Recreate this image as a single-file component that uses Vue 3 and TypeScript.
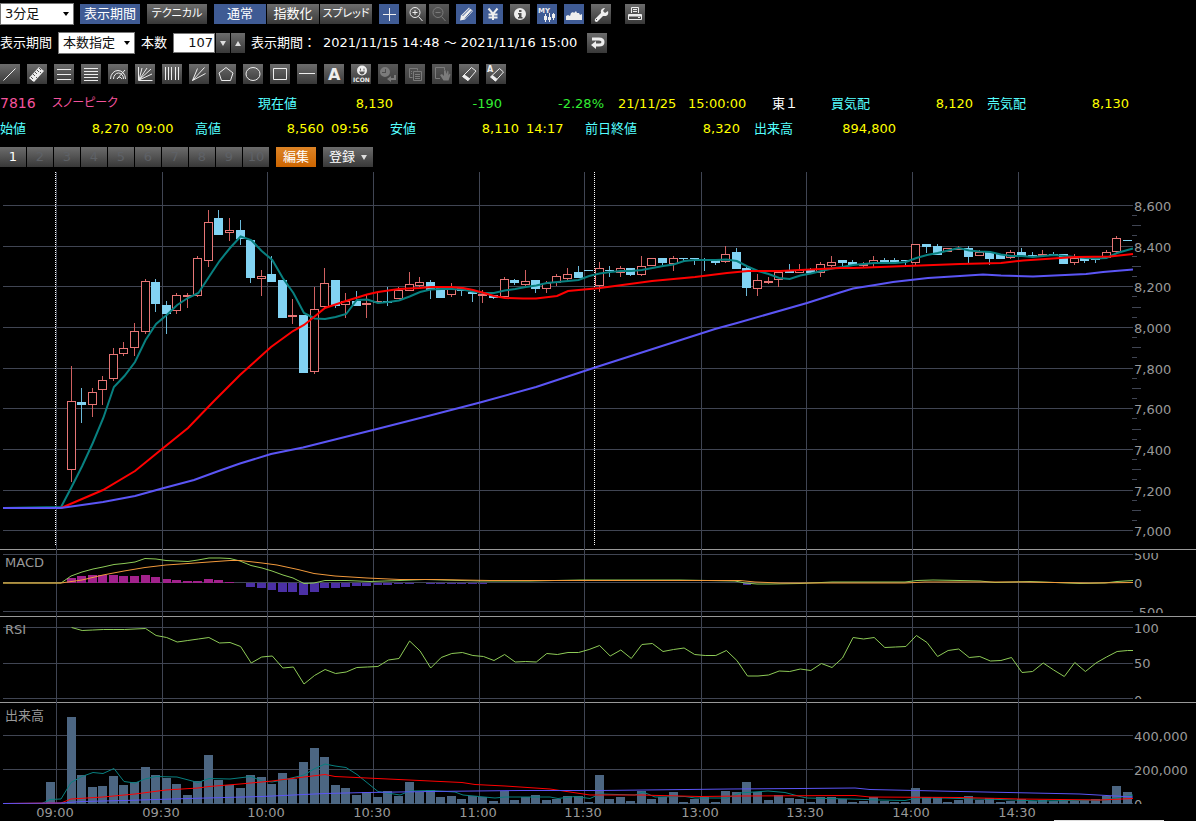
<script setup lang="ts">
import { ref } from 'vue'

interface Icon {
  label: string
  stroke?: string
  fill?: string
  glyph?: { text: string; x: number; y: number; size: number }[]
  active?: boolean
  disabled?: boolean
}

const viewIcons: Icon[] = [
  { label: '十字線', stroke: 'M10.5 4v13M4 10.5h13', active: true },
  { label: '拡大', stroke: 'M14 8.5a5 5 0 1 1-10 0a5 5 0 0 1 10 0M9 6v5M6.500 8.500h5M12.500 12.500l4 4.500' },
  { label: '縮小', stroke: 'M14 8.500a5 5 0 1 1-10 0a5 5 0 0 1 10 0M6.500 8.500h5M12.500 12.500l4 4.500', disabled: true },
  { label: '描画', fill: 'M4 16.500l1-5l8-8l4 3.500l-8 8.500z', stroke: 'M6.500 12l8-8M9 14.500l7-8', active: true },
  { label: '円', stroke: 'M5.500 4.500l4.500 5.500l4.500-5.500M10 10v6M5.500 10.500h9M5.500 13.500h9', active: true },
  { label: '情報', fill: 'M10 4a6 6 0 1 0 0 12a6 6 0 0 0 0-12zM9 6h2.500v2h-2.500zM8 9h3.500v4h1v1.500h-4.500v-1.500h1v-2.500h-1z' },
  { label: 'MYチャート', glyph: [{ text: 'MY', x: 1, y: 9, size: 7 }], stroke: 'M8.500 10v8M12.500 9v9M16.500 9v7', fill: 'M7 12h3v4h-3zM11 13h3v3h-3zM15 10h3v4h-3z', active: true },
  { label: 'エリア', fill: 'M2 16v-4l2-1l2 1l1-3l2-1l1 1l2-2l1 2h2l1 2l2-1v6z', active: true },
  { label: '設定', fill: 'M4 15l6-6q-1-4 3-5l1 0l-2 3l2 2l3-2q1 4-2 5l-3 0l-6 6q-3 0-2-3zM5 15v1h1v-1z' },
]

const drawIcons: Icon[] = [
  { label: 'トレンドライン', stroke: 'M3.500 16.500l12-12' },
  { label: '定規', fill: 'M2 14l10-11l5 4l-10 11z', stroke: 'M3 14l3 3' },
  { label: '三本線', stroke: 'M3 5.500h14M3 10.500h14M3 15.500h14' },
  { label: '五本線', stroke: 'M3 4.500h14M3 7.500h14M3 10.500h14M3 13.500h14M3 16.500h14' },
  { label: 'アーク', stroke: 'M2.500 15a7.500 8.500 0 0 1 15 0M5.500 15a5 6 0 0 1 10 0M9 15a3 4 0 0 1 5 0M9 15l8-9' },
  { label: 'ファン', stroke: 'M3.500 3v13.500h14M4 16l3-12M4 16l8-12M4 16l12-11M4 16l13-6' },
  { label: '縦線群', stroke: 'M3.500 3v13M6.500 3v13M9.500 3v13M13.500 3v13M16.500 3v13' },
  { label: 'スピードライン', stroke: 'M3.500 16.500l5-12M3.500 16.500l12-13M3.500 16.500l13-7' },
  { label: '五角形', stroke: 'M10 3.500l7 5.500l-2.500 7.500h-9l-2.500-7.500z' },
  { label: '円形', stroke: 'M17 10a7 6.500 0 1 1-14 0a7 6.500 0 0 1 14 0z' },
  { label: '四角形', stroke: 'M3.500 4.500h13v11h-13z' },
  { label: '水平線', stroke: 'M2 9.500h16' },
  { label: '文字', glyph: [{ text: 'A', x: 4, y: 16, size: 16 }] },
  { label: 'アイコン', fill: 'M11 1.500a5 5 0 1 0 0 10a5 5 0 0 0 0-10zM9 4.500h1v2h-1zM12.500 4.500h1v2h-1zM8 7.500h6q-1 3-3 3t-3-3z', glyph: [{ text: 'ICON', x: 2, y: 18, size: 6 }] },
  { label: '履歴', fill: 'M7 3a5 5 0 1 0 0 10a5 5 0 0 0 0-10zM7 5h1v4h-4v-1h3zM9 15l4-3v2h3v-3h2v5h-5v2z', disabled: true },
  { label: '複製', stroke: 'M4.500 4.500h8v2M4.500 4.500v9h3M8.500 7.500h8v9h-8zM10 10.500h5M10 12.500h5M10 14.500h5M6 7.500h1M6 9.500h1', disabled: true },
  { label: '移動', stroke: 'M8 14.500h-4.500v-11h9v3', fill: 'M8 11l2-1l2 2v-5l1.500-1l1 4l1-3.500l1 1v4l1-2l1 1l-2 6h-5z', disabled: true },
  { label: '消しゴム', stroke: 'M12.500 3.500l4.500 3.500l-8 9.500l-5.500-4z', fill: 'M3.500 12.500l2-2l5.500 4l-2 2.500z' },
  { label: '全消去', stroke: 'M13.500 4.500l4 3.500l-8 9l-5-4z', fill: 'M4.500 13l2-2l5 4l-2 2.500z', glyph: [{ text: 'A', x: 1, y: 8, size: 8 }] },
]

const printer: Icon = { label: '印刷', stroke: 'M6.500 9v-5.500h7v5.500M8 5.500h4M8 7.500h4M3.500 10.500h13v5h-13z', fill: 'M4 11h12v1.500h-12zM13 13h2v1h-2z' }
const period = ref(107)
const tabs = Array.from({ length: 10 }, (_, i) => i + 1)

const step = 10.56
const center = (i: number) => 3 + (i + 0.5) * step
const barX = (i: number) => Math.round(center(i)) - 5

/* Direction, high, body top, body bottom, low */
type Candle = [string, number, number, number, number]
const candles: Candle[] = `u 366 401 470 482
d 388 402 405 423
u 388 392 405 417
u 376 380 390 405
u 348 354 379 381
u 342 348 354 356
u 323 331 348 356
u 279 281 332 334
d 279 282 304 312
d 301 305 314 334
u 293 295 311 314
u 293 295 297 308
u 256 258 296 297
u 210 222 261 267
d 210 218 235 235
u 218 230 233 241
d 220 230 239 245
d 239 240 278 283
u 270 276 279 296
d 256 274 282 282
d 280 280 318 318
u 299 315 317 324
d 315 315 373 373
u 287 309 372 374
u 268 283 307 308
d 280 280 306 308
u 293 301 305 318
d 291 301 306 306
u 294 303 305 318
u 292 301 303 303
d 287 301 303 306
u 287 290 299 299
u 272 284 291 291
u 277 282 286 287
d 280 282 290 299
d 288 288 298 298
u 283 289 295 297
d 288 288 291 296
d 289 292 294 302
u 290 294 295 303
d 295 295 298 299
u 277 279 297 298
d 279 280 283 285
u 270 281 285 286
d 280 280 289 293
u 281 283 289 293
u 274 276 283 286
u 268 274 279 281
d 266 272 278 278
d 270 270 271 271
u 262 268 286 292
d 266 270 271 277
u 266 268 273 277
d 268 268 275 276
u 256 266 275 276
u 258 258 266 266
d 258 258 263 265
u 256 258 264 271
d 258 258 259 261
d 258 258 259 265
d 258 260 261 271
d 260 260 263 265
u 246 254 262 263
d 248 252 269 269
d 266 268 288 296
u 274 280 289 296
u 277 281 283 284
u 271 272 280 287
d 264 270 273 273
u 264 270 273 273
d 268 270 273 273
u 262 264 273 277
u 256 262 266 267
d 260 260 263 266
d 260 262 265 265
u 262 264 265 267
u 256 260 264 267
d 258 260 262 262
d 258 260 262 262
d 260 260 261 265
u 244 244 263 265
d 244 244 247 253
d 244 246 255 255
u 248 248 252 252
u 246 248 250 250
d 246 248 257 263
u 250 252 256 256
d 252 252 259 265
d 254 254 259 259
u 250 252 258 259
d 248 252 256 256
d 252 255 257 257
u 250 254 256 256
d 252 254 256 256
d 254 254 264 264
u 254 258 263 265
d 258 258 261 263
d 258 258 260 263
u 250 252 258 259
u 236 238 252 253
d 240 240 241 241`
  .split('\n')
  .map((row) => {
    const [dir, ...v] = row.split(' ')
    return [dir, ...v.map(Number)] as Candle
  })

const series = (start: number, values: number[]) =>
  values.map((v, k) => `${center(start + k).toFixed(1)},${v}`).join(' ')

const shortMa = '3,508 ' + series(5, [
  507, 487, 466, 443, 418, 387, 376, 362, 340, 324, 315, 305, 298, 293, 277, 261, 248, 236.5, 240, 251, 260, 278, 293,
  313, 318.5, 319, 317, 314, 300, 299.5, 303, 302, 300.500, 296.500, 292, 289.500, 289, 289, 289.500, 291.500, 293, 293,
  290.500, 289, 287, 285.500, 283, 282, 281, 280, 276, 273.500, 272, 271, 271, 270, 268, 266, 264.500, 261, 260, 260, 260, 259.500,
  261, 266.500, 271, 274, 278, 279, 275.500, 273.500, 271, 268.500, 267, 265, 264, 263, 263, 263, 262, 258, 255, 253, 250.500, 248,
  250.500, 251.500, 252, 254.500, 256, 256, 257, 256, 255, 256, 257, 258, 258.500, 258, 253, 250,
]) + ' 1133,248.5'
const midMa = '61,508 75,502 103,490 135,471 162,449 188,428 214,401 240,375 271,347 293,331 304,325 314,317 325,308 346,301 367,294.5 378,292 399,289 420,288 431,287 452,287 463,288 473,290 484,293 494,296 505,298 523,298.5 536,298.5 557,296 568,291 600,288 652,281 695,277 727,273 748,271 780,271 811,269.5 840,268 853,268 907,266 960,264 1001,263 1023,260.5 1053,258.5 1076,257 1110,256.5 1133,254'
const longMa = '3,508 61,508 103,502 135,496 162,488.5 194,480 220,470.5 240,463.5 271,454 303,447.5 373,430 430,415.5 480,402.5 536,387 595,367.5 715,329 737,323 807,303 840,292.5 853,288.5 875,285 893,282 928,278 960,276 983,274.5 1001,275.5 1033,276.5 1065,275 1086,274 1103,272 1133,269.5'

const macdLine = '3,583 61,583 71,576 82,572 93,569 103,567 114,564.5 124,563.5 135,562 145,558.5 156,559 166,560.5 177,561 188,561.5 198,560 209,558 220,558 230,558.5 240,561 251,565.5 262,568 272,571 283,575 293,578 304,583.5 314,583 325,580.5 346,580.5 370,581.5 400,580.5 425,579.5 480,581 530,581 580,580 680,580 735,581 745,583 757,584 770,584 800,583.5 832,582 905,582 917,580.5 933,580 960,580.5 980,581 995,582.5 1030,581.5 1080,583.5 1105,583 1117,581.5 1133,580.5'
const macdSignal = '3,583 61,583 82,580 103,575 124,571 145,567.5 166,565 188,563.5 209,562 230,560.5 240,560.5 262,563 277,565 298,569.5 314,573.5 335,576 367,578 400,579.5 435,579.5 490,580.5 680,580.5 740,580.5 755,582 780,583 905,583 925,582 1020,582 1090,583 1133,582.5'
const histogram = [
  -5, -7, -8, -8, -8, -7, -7, -8, -6, -4, -3, -2, -2, -4, -3, -1, 0, 4, 5, 7, 9, 9, 12, 9, 5, 5, 4, 3, 3, 2, 2, 1, 1, 0, 1, 1, 1, 1, 1, 1,
]

const rsi = series(6, [
  627.5, 630.5, 630, 629.5, 629.500, 629.500, 629, 628.500, 635.500, 637.500, 642, 640.500, 639, 637.500, 643, 642.500, 646.500, 663,
  657, 656, 668, 667, 684, 675.500, 669.500, 673.500, 672, 667.500, 667, 666.500, 660, 658.500, 641, 651, 668, 657.500, 653.500, 652.500,
  655.500, 656.500, 660.500, 654.500, 662, 661.500, 662, 653.500, 654.500, 652.500, 652.500, 649.500, 645.500, 656, 650, 658.500, 644.500,
  643.500, 651.500, 649.500, 648, 654.500, 655.500, 655.500, 650.500, 660.500, 676, 676, 675, 671, 671.500, 669, 670.500, 663.500,
  667.500, 658, 637.500, 639, 637.500, 647.500, 647, 646.500, 635.500, 642.500, 656.500, 650.500, 649, 657.500, 656.500, 661, 660.500,
  657.500, 672.500, 671.500, 663, 670, 676.500, 662.500, 671.500, 663, 657, 651.500, 650.500,
]) + ' 1133,650.5'

const volumes = [
  782, 803, 717, 775, 787, 786, 776, 785, 782, 767, 775, 778, 784, 795, 781, 755, 780, 785, 788, 775, 777, 784, 773, 779, 762,
  748, 757, 785, 788, 795, 792, 797, 791, 796, 782, 792, 790, 797, 796, 799, 796, 797, 801, 791, 800, 797, 795, 800, 799, 796,
  796, 802, 775, 799, 797, 801, 791, 799, 797, 792, 802, 799, 797, 802, 791, 792, 782, 792, 800, 795, 798, 799, 802, 797, 797,
  799, 802, 801, 797, 801, 802, 802, 788, 797, 797, 802, 800, 796, 800, 798, 802, 801, 799, 801, 800, 801, 800, 801, 800, 799,
  796, 786, 792,
]
const volShort = '3,803.5 42,803.5 50,799.5 61,799 71,782.5 82,776.5 93,772.5 103,773.5 114,768.5 124,781.5 135,783 145,779 156,776.5 177,777 198,782.5 209,778.5 230,779 251,776.5 262,781 272,782 283,780 304,775 314,769 325,764 335,766 346,767.5 357,774.5 378,791.5 400,795 410,791 431,790.5 455,792 463,795 495,798 505,797 550,797 558,798.5 575,796.5 590,798.5 600,794 635,795 643,792 655,797 685,796.5 695,798 727,798 740,793 768,791 785,792.5 800,796.5 807,798 850,799 880,800 905,800.5 917,798 945,798 975,799 1000,799.5 1040,801 1105,800 1133,795'
const volMid = '3,803.5 61,803 71,799 103,797 135,794 166,790 198,788 209,786.5 240,784 272,781 304,777 325,774.5 335,776.5 367,778 430,781 462,782.5 475,784.5 505,786 550,789 590,795 640,795 700,796.5 740,796 855,795.5 870,797 960,797.5 1020,799 1100,800 1133,798.5'
const volLong = '3,803.5 61,803 82,801.5 124,800.5 188,798.5 262,796.5 325,793.5 367,792.5 430,791.5 520,790.5 600,790.5 730,789 800,788.5 855,788 870,789.5 960,791.5 1080,794 1133,797'

const times = [
  { x: 56, t: '09:00' }, { x: 162, t: '09:30' }, { x: 267, t: '10:00' }, { x: 373, t: '10:30' }, { x: 479, t: '11:00' },
  { x: 584, t: '11:30' }, { x: 701, t: '13:00' }, { x: 806, t: '13:30' }, { x: 912, t: '14:00' }, { x: 1018, t: '14:30' },
]
const prices = [
  { y: 205, t: '8,600' }, { y: 246, t: '8,400' }, { y: 286, t: '8,200' }, { y: 327, t: '8,000' }, { y: 368, t: '7,800' },
  { y: 408, t: '7,600' }, { y: 449, t: '7,400' }, { y: 490, t: '7,200' }, { y: 530, t: '7,000' },
]
const ticks = Array.from({ length: 32 }, (_, k) => k)
  .filter((k) => k % 4 !== 0)
  .map((k) => ({ y: Math.round(205 + k * 10.16), w: k % 4 === 2 ? 9 : 5 }))
</script>

<template>
  <main class="app">
    <div class="toolbar">
      <span class="select wide">
        <select aria-label="足種"><option>3分足</option></select>
      </span>
      <div class="group">
        <button type="button" class="btn w60 on">表示期間</button>
        <button type="button" class="btn w60 kana">テクニカル</button>
      </div>
      <div class="joined">
        <button type="button" class="btn w52 on">通常</button>
        <button type="button" class="btn w52">指数化</button>
        <button type="button" class="btn w52 kana">スプレッド</button>
      </div>
      <div class="icons">
        <button
          v-for="(ic, n) in viewIcons"
          :key="ic.label"
          type="button"
          class="icon"
          :class="{ on: ic.active, off: ic.disabled, near: n === 2 }"
          :aria-label="ic.label"
          :disabled="ic.disabled"
        >
          <svg viewBox="0 0 20 20">
            <path v-if="ic.fill" class="f" :d="ic.fill" />
            <path v-if="ic.stroke" class="s" :class="{ navy: n === 3, bold: n === 4 }" :d="ic.stroke" />
            <text v-for="g in ic.glyph" :key="g.text" :x="g.x" :y="g.y" :font-size="g.size">{{ g.text }}</text>
          </svg>
        </button>
        <button type="button" class="icon print" :aria-label="printer.label">
          <svg viewBox="0 0 20 20"><path class="f" :d="printer.fill" /><path class="s" :d="printer.stroke" /></svg>
        </button>
      </div>
    </div>

    <div class="toolbar period">
      <label for="mode">表示期間</label>
      <span class="select mode">
        <select id="mode"><option>本数指定</option></select>
      </span>
      <label for="count">本数</label>
      <div class="spinner">
        <input id="count" v-model="period" type="text" />
        <button type="button" class="btn spin" aria-label="減らす" @click="period--"><i class="tri down"></i></button>
        <button type="button" class="btn spin" aria-label="増やす" @click="period++"><i class="tri up"></i></button>
      </div>
      <span class="range-label">表示期間：</span>
      <span class="range">2021/11/15 14:48 ～ 2021/11/16 15:00</span>
      <button type="button" class="icon" aria-label="戻す">
        <svg viewBox="0 0 20 20"><path class="s thick" d="M5 6h7q4 0 4 3t-4 3h-4" /><path class="f" d="M4 12l5-4v8z" /></svg>
      </button>
    </div>

    <div class="toolbar draw">
      <button
        v-for="(ic, n) in drawIcons"
        :key="ic.label"
        type="button"
        class="icon"
        :class="{ off: ic.disabled }"
        :aria-label="ic.label"
        :disabled="ic.disabled"
      >
        <svg viewBox="0 0 20 20">
          <path v-if="ic.fill" class="f" :d="ic.fill" />
          <path v-if="ic.stroke" class="s" :d="ic.stroke" />
          <path v-if="n === 1" class="s dark" d="M6 10l2 2M8 8l2 2M10 6l2 2M12 4l2 2M4 13l2 2M13 8l1 1M9 13l1 1" />
          <text v-for="g in ic.glyph" :key="g.text" :x="g.x" :y="g.y" :font-size="g.size">{{ g.text }}</text>
        </svg>
      </button>
    </div>

    <section class="quote first">
      <span class="code">7816</span>
      <span class="code kana">スノーピーク</span>
      <span class="key">現在値</span>
      <span class="num">8,130</span>
      <span class="num loss">-190</span>
      <span class="num loss">-2.28%</span>
      <span class="val pad">21/11/25</span>
      <span class="val">15:00:00</span>
      <span class="market">東１</span>
      <span class="key">買気配</span>
      <span class="num">8,120</span>
      <span class="key pad">売気配</span>
      <span class="num">8,130</span>
    </section>
    <section class="quote second">
      <span class="key">始値</span><span class="num">8,270</span><span class="val time">09:00</span>
      <span class="key">高値</span><span class="num">8,560</span><span class="val time">09:56</span>
      <span class="key">安値</span><span class="num">8,110</span><span class="val time">14:17</span>
      <span class="key">前日終値</span><span class="num">8,320</span>
      <span class="key pad">出来高</span><span class="num">894,800</span>
    </section>

    <nav class="tabs">
      <div class="joined">
        <button v-for="n in tabs" :key="n" type="button" class="btn tab" :disabled="n > 1">{{ n }}</button>
      </div>
      <button type="button" class="btn edit">編集</button>
      <button type="button" class="btn save">登録<i class="tri down small"></i></button>
    </nav>

    <section class="charts">
      <svg class="panel" viewBox="0 168 1196 381" role="img" aria-label="株価">
        <g class="grid">
          <rect v-for="t in times" :key="t.t" :x="t.x" y="172" width="1" height="377" />
          <rect v-for="p in prices" :key="p.t" x="3" :y="p.y" width="1130" height="1" />
          <rect v-for="k in ticks" :key="k.y" x="1132" :y="k.y" :width="k.w" height="1" />
        </g>
        <path class="dots" d="M55.5 172v374M594.5 172v374" />
        <g v-for="(c, k) in candles" :key="k" :class="c[0] === 'u' ? 'rise' : 'fall'">
          <template v-if="c[0] === 'u'">
            <rect class="wick" :x="barX(k + 6) + 4" :y="c[1]" width="1" :height="c[2] - c[1]" />
            <rect class="wick" :x="barX(k + 6) + 4" :y="c[3]" width="1" :height="c[4] - c[3]" />
            <rect class="hollow" :x="barX(k + 6) + 0.5" :y="c[2] + 0.5" width="8" :height="Math.max(c[3] - c[2] - 1, 1)" />
          </template>
          <template v-else>
            <rect class="wick" :x="barX(k + 6) + 4" :y="c[1]" width="1" :height="c[4] - c[1]" />
            <rect class="solid" :x="barX(k + 6)" :y="c[2]" width="9" :height="Math.max(c[3] - c[2], 1)" />
          </template>
        </g>
        <polyline class="line teal" :points="shortMa" />
        <polyline class="line red" :points="midMa" />
        <polyline class="line blue" :points="longMa" />
        <text v-for="p in prices" :key="p.t" x="1134" :y="p.y + 6">{{ p.t }}</text>
      </svg>

      <svg class="panel" viewBox="0 549 1196 67" role="img" aria-label="MACD">
        <clipPath id="macd-clip"><rect x="0" y="553" width="1196" height="60" /></clipPath>
        <rect class="divider" x="0" y="549" width="1196" height="1" />
        <g class="grid">
          <rect v-for="y in [554, 582, 611]" :key="y" x="3" :y="y" width="1130" height="1" />
        </g>
        <rect
          v-for="(h, k) in histogram"
          :key="k"
          :class="h < 0 ? 'plus' : 'minus'"
          :x="barX(k + 6)"
          :y="h < 0 ? 583 + h : 583"
          width="9"
          :height="Math.abs(h)"
        />
        <rect class="minus" x="743" y="583" width="8" height="2" />
        <g class="grid">
          <rect v-for="t in times" :key="t.t" :x="t.x" y="549" width="1" height="67" />
        </g>
        <polyline class="thin green" :points="macdLine" />
        <polyline class="thin orange" :points="macdSignal" />
        <text x="5" y="567">MACD</text>
        <g clip-path="url(#macd-clip)">
          <text x="1134" y="560">500</text>
          <text x="1134" y="588">0</text>
          <text x="1134" y="617">-500</text>
        </g>
      </svg>

      <svg class="panel" viewBox="0 616 1196 86" role="img" aria-label="RSI">
        <clipPath id="rsi-clip"><rect x="0" y="617" width="1196" height="82" /></clipPath>
        <rect class="divider" x="0" y="616" width="1196" height="1" />
        <g class="grid">
          <rect v-for="t in times" :key="t.t" :x="t.x" y="616" width="1" height="86" />
          <rect v-for="y in [627, 663, 698]" :key="y" x="3" :y="y" width="1130" height="1" />
        </g>
        <polyline class="thin green" :points="rsi" />
        <text x="5" y="634">RSI</text>
        <g clip-path="url(#rsi-clip)">
          <text x="1134" y="633">100</text>
          <text x="1134" y="668">50</text>
          <text x="1134" y="705">0</text>
        </g>
      </svg>

      <svg class="panel" viewBox="0 702 1196 119" role="img" aria-label="出来高">
        <clipPath id="vol-clip"><rect x="0" y="702" width="1196" height="102" /></clipPath>
        <rect class="divider" x="0" y="702" width="1196" height="1" />
        <g class="grid">
          <rect v-for="t in times" :key="t.t" :x="t.x" y="702" width="1" height="102" />
          <rect v-for="y in [735, 769, 803]" :key="y" x="3" :y="y" width="1130" height="1" />
        </g>
        <rect v-for="(v, k) in volumes" :key="k" class="vol" :x="barX(k + 4)" :y="v" width="9" :height="804 - v" />
        <polyline class="thin teal" :points="volShort" />
        <polyline class="thin red" :points="volMid" />
        <polyline class="thin blue" :points="volLong" />
        <text x="5" y="720">出来高</text>
        <g clip-path="url(#vol-clip)">
          <text x="1134" y="741">400,000</text>
          <text x="1134" y="775">200,000</text>
          <text x="1134" y="809">0</text>
        </g>
        <text v-for="t in times" :key="t.t" class="mid" :x="t.x - 1" y="817">{{ t.t }}</text>
        <rect class="edge" x="1054" y="820" width="110" height="1" />
      </svg>
    </section>
  </main>
</template>

<style>
body {
  background: #000;
  overflow-x: hidden;
}
</style>

<style scoped>
.app {
  background: #000;
  color: #fff;
  font: 13px/20px "DejaVu Sans", "Noto Sans CJK JP", sans-serif;
  white-space: nowrap;
}
.toolbar {
  display: flex;
  align-items: center;
  height: 22px;
  padding-top: 3px;
  gap: 7px;
}
.period {
  padding-top: 7px;
  gap: 6px;
}
.draw {
  padding-top: 9px;
}
.group {
  display: flex;
  gap: 7px;
  margin-left: -1px;
}
.joined {
  display: flex;
  gap: 1px;
}
.icons {
  display: flex;
  gap: 7px;
}
.icons .near {
  margin-left: -4px;
}
.icons .print {
  margin-left: 7px;
}
.select {
  position: relative;
}
.select::after {
  content: "";
  position: absolute;
  right: 5px;
  top: 9px;
  border: 3px solid transparent;
  border-top: 4px solid #000;
  border-bottom: 0;
  pointer-events: none;
}
select {
  appearance: none;
  display: block;
  width: 100%;
  height: 22px;
  border: 1px solid #777;
  border-radius: 0;
  background: #fff;
  color: #111;
  font: inherit;
  padding: 0 4px;
}
.wide {
  width: 74px;
}
.mode {
  width: 77px;
}
.btn,
.icon {
  height: 20px;
  padding: 0;
  border: 0;
  background: linear-gradient(#6c6c6c, #383838);
  color: #fff;
  font: inherit;
  text-align: center;
}
.btn:disabled {
  color: #5e6166;
}
.btn.on,
.icon.on {
  background: #3f5b94;
}
.w60 {
  width: 60px;
}
.w52 {
  width: 52px;
}
.kana {
  font-feature-settings: "palt";
}
.btn.kana {
  font-size: 11px;
}
.icon {
  width: 20px;
  flex: none;
}
.icon svg {
  display: block;
  width: 20px;
  height: 20px;
}
.f {
  fill: #eee;
  fill-rule: evenodd;
}
.s {
  fill: none;
  stroke: #eee;
  stroke-width: 1;
}
.s.dark {
  stroke: #555;
}
.s.navy {
  stroke: #3f5b94;
}
.s.bold {
  stroke-width: 2;
}
.s.thick {
  stroke-width: 3;
}
.icon text {
  fill: #eee;
  font-family: "DejaVu Sans", sans-serif;
  font-weight: bold;
}
.icon.off {
  background: linear-gradient(#585858, #3c3c3c);
}
.off .f {
  fill: #7b7b7b;
}
.off .s {
  stroke: #7b7b7b;
}
.spinner {
  display: flex;
  gap: 1px;
  align-items: center;
}
input {
  box-sizing: border-box;
  width: 42px;
  height: 20px;
  border: 1px solid #777;
  padding: 0 1px;
  background: #fff;
  color: #111;
  font: inherit;
  text-align: right;
}
.spin {
  width: 14px;
}
.tri {
  display: inline-block;
  border: 3px solid transparent;
  vertical-align: middle;
}
.tri.down {
  border-top: 5px solid #ddd;
  border-bottom: 0;
}
.tri.up {
  border-bottom: 5px solid #ddd;
  border-top: 0;
}
.tri.small {
  margin-left: 6px;
}
.range-label {
  width: 66px;
}
.range {
  min-width: 258px;
}
.quote {
  display: grid;
  height: 25px;
  line-height: 25px;
}
.first {
  grid-template-columns: 52px 206px 40px 95px 109px 102px 84px 84px 59px 40px 102px 54px 102px;
  padding-top: 6px;
}
.second {
  grid-template-columns: 52px 77px 66px 52px 77px 66px 52px 77px 66px 66px 89px 66px 90px;
}
.key {
  color: #5ff;
}
.num,
.val {
  color: #ff0;
}
.num {
  text-align: right;
}
.num.loss {
  color: #3e3;
}
.code {
  color: #f4539c;
  font-size: 14px;
}
.code.kana {
  font-size: 12px;
}
.pad {
  padding-left: 14px;
}
.time {
  padding-left: 7px;
}
.tabs {
  display: flex;
  gap: 7px;
  padding: 6px 0 1px;
}
.tab {
  width: 26px;
}
.btn.edit {
  width: 40px;
  background: linear-gradient(#dd8426, #cd6500);
}
.save {
  width: 50px;
}
.panel {
  display: block;
  width: 100%;
  height: auto;
}
.panel text {
  fill: #999;
  font-size: 13px;
}
.panel .mid {
  text-anchor: middle;
}
.grid {
  fill: #404553;
}
.dots {
  stroke: #fff;
  stroke-width: 1;
  stroke-dasharray: 1 1;
}
.divider {
  fill: #999;
}
.rise .wick {
  fill: #d06060;
}
.hollow {
  fill: #000;
  stroke: #e77676;
  stroke-width: 1;
}
.fall .wick {
  fill: #6bb9d8;
}
.solid {
  fill: #82d3f3;
}
.plus {
  fill: #a2228c;
}
.minus {
  fill: #4b30a4;
}
.vol {
  fill: #4c6682;
}
.line {
  fill: none;
  stroke-width: 2;
}
.thin {
  fill: none;
  stroke-width: 1;
}
.teal {
  stroke: #088080;
}
.red {
  stroke: #f00;
}
.blue {
  stroke: #5b55f5;
}
.green {
  stroke: #8ecb57;
}
.orange {
  stroke: #f29a3c;
}
.edge {
  fill: #ddd;
}
</style>
